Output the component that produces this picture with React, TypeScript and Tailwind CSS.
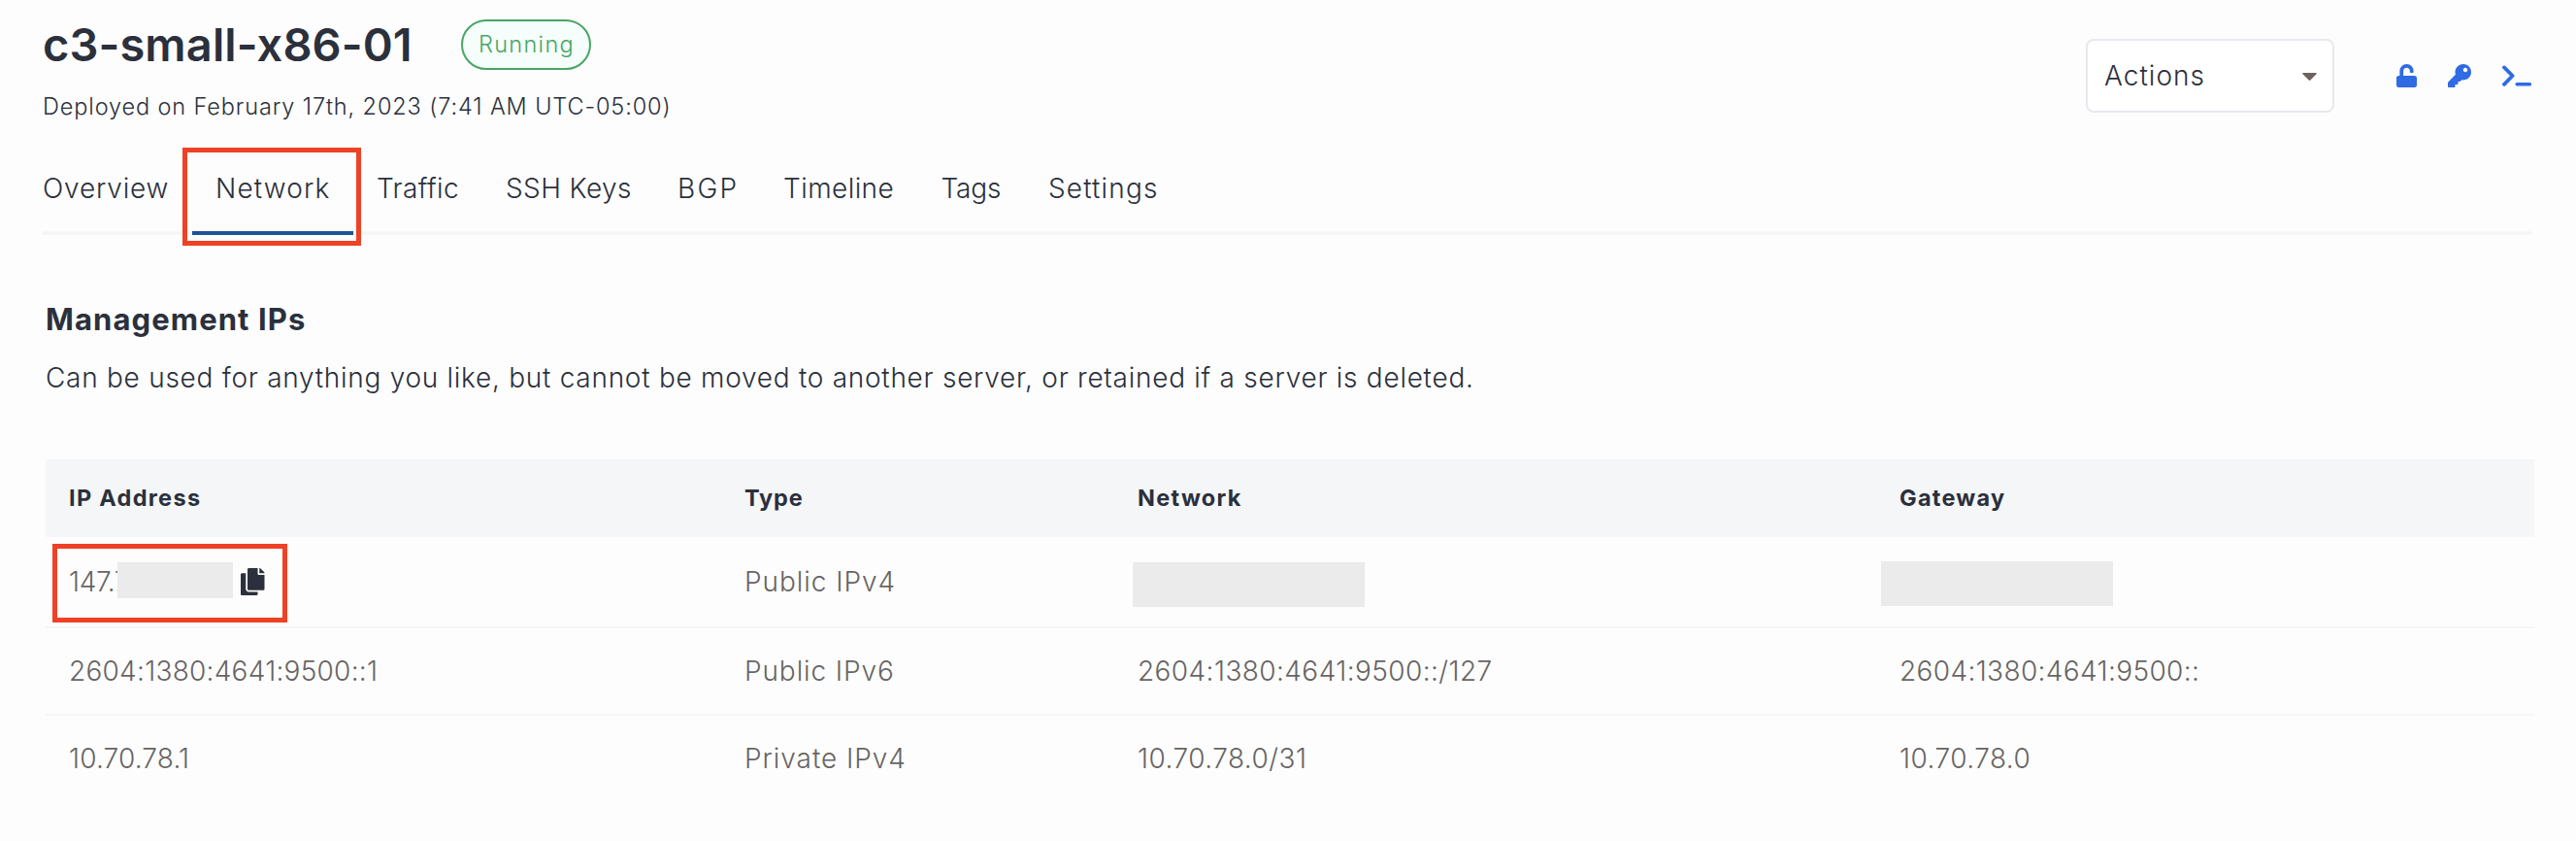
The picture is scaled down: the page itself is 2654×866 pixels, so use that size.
import type { ReactNode } from 'react';
import { FaCopy, FaKey, FaUnlock } from 'react-icons/fa';

const tabs = [
  { label: 'Overview', box: 'w-[154px] tracking-[0.82px]' },
  { label: 'Network', box: 'w-[166px] pl-6 tracking-[1.13px]', active: true },
  { label: 'Traffic', box: 'w-[133px] pl-6 tracking-[0.39px]' },
  { label: 'SSH Keys', box: 'w-[177px] pl-6 tracking-[0.39px]' },
  { label: 'BGP', box: 'w-[109px] pl-6 tracking-[2.25px]' },
  { label: 'Timeline', box: 'w-[162.5px] pl-6 tracking-[0.42px]' },
  { label: 'Tags', box: 'w-[110.5px] pl-6 tracking-[-0.17px]' },
  { label: 'Settings', box: 'pl-6 tracking-[1.15px]' },
];

const columns = 'grid grid-cols-[696px_405px_785px_1fr] items-center';

function Redacted({ className }: { className: string }) {
  return <span className={`block bg-[#ebebeb] ${className}`} />;
}

function Cell({ className = '', children }: { className?: string; children: ReactNode }) {
  return <div className={`pl-6 whitespace-nowrap ${className}`}>{children}</div>;
}

function TerminalIcon() {
  return (
    <svg viewBox="0 0 30 24" className="h-6 w-[30px]" fill="none" stroke="currentColor" strokeLinecap="round" strokeLinejoin="round">
      <path d="M2 3.4 10.6 12 2 20.8" strokeWidth="3.8" />
      <path d="M15.2 20.7H28.3" strokeWidth="3.6" />
    </svg>
  );
}

function Header() {
  return (
    <header className="flex justify-between pt-5 pr-[46px] pl-11">
      <div>
        <div className="flex h-[52px] items-center">
          <h1 className="w-[431px] text-[47px] font-semibold tracking-[0.1px] whitespace-nowrap">c3-small-x86-01</h1>
          <span className="flex h-[52px] w-[134px] items-center rounded-[26px] border-2 border-[#48a565] bg-[#f5fefa] pl-4 text-[23.5px] tracking-[1.3px] text-[#48a565]">
            Running
          </span>
        </div>
        <p className="mt-[22px] text-[23.5px] leading-8 tracking-[0.88px]">
          Deployed on February 17th, 2023 (7:41 AM UTC-05:00)
        </p>
      </div>
      <div className="mt-5 flex h-[76px] items-center text-[#2f6be3]">
        <button className="flex h-[76px] w-64 items-center justify-between rounded-lg border-2 border-[#e8e8ef] bg-white pr-4 pl-[17px] text-[28px] tracking-[1.04px] text-[#2b303c]">
          Actions
          <svg viewBox="0 0 15 8" className="mt-0.5 h-2 w-[15px] fill-[#6b6461]">
            <path d="M1 0h13q1.4.2.5 1.2L8.6 7.2q-1.1 1-2.2 0L.5 1.2Q-.4.2 1 0Z" />
          </svg>
        </button>
        <FaUnlock className="ml-16 h-6 w-[21px]" />
        <FaKey className="ml-8 h-6 w-6" />
        <span className="ml-8">
          <TerminalIcon />
        </span>
      </div>
    </header>
  );
}

function Tabs() {
  return (
    <nav className="mt-6 mr-[46px] ml-11 flex h-[92px] border-b-4 border-[#f5f6f8] text-[28px]">
      {tabs.map((tab) => (
        <a key={tab.label} className={`relative flex h-[88px] items-center whitespace-nowrap ${tab.box}`}>
          {tab.label}
          {tab.active && (
            <>
              <span className="absolute top-[88px] left-0 h-1 w-[166px] bg-[#1f5297]" />
              <span className="absolute top-[2px] -left-2.5 h-[101px] w-[184px] border-[5px] border-[#ee4126]" />
            </>
          )}
        </a>
      ))}
    </nav>
  );
}

function IpTable() {
  return (
    <div className="mr-[43px] ml-[47px] text-[28px] text-[#676463]">
      <div className={`h-20 bg-[#f5f6f8] text-[23.5px] font-bold text-[#2b303c] ${columns}`}>
        <Cell className="tracking-[1.3px]">IP Address</Cell>
        <Cell className="tracking-[0.84px]">Type</Cell>
        <Cell className="tracking-[1.3px]">Network</Cell>
        <Cell className="tracking-[1.25px]">Gateway</Cell>
      </div>
      <div className={`relative h-[94px] border-b-2 border-[#f5f6f8] ${columns}`}>
        <Cell className="tracking-[-0.37px]">147.7</Cell>
        <Cell className="tracking-[0.95px]">Public IPv4</Cell>
        <Cell>
          <Redacted className="mt-[6px] -ml-[5px] h-[46px] w-[239px]" />
        </Cell>
        <Cell>
          <Redacted className="mt-[4px] -ml-[19px] h-[46px] w-[239px]" />
        </Cell>
        <span className="absolute top-[26px] left-[74px] h-[37px] w-[119px] bg-[#ebebeb]" />
        <FaCopy className="absolute top-8 left-[201px] h-7 w-[24.5px] text-[#2b303c]" />
        <span className="absolute top-[7px] left-[7px] h-[81px] w-[242px] border-[5px] border-[#ee4126]" />
      </div>
      <div className={`h-[90px] border-b-2 border-[#f5f6f8] ${columns}`}>
        <Cell className="tracking-[0.26px]">2604:1380:4641:9500::1</Cell>
        <Cell className="tracking-[0.9px]">Public IPv6</Cell>
        <Cell className="tracking-[0.42px]">2604:1380:4641:9500::/127</Cell>
        <Cell className="tracking-[0.37px]">2604:1380:4641:9500::</Cell>
      </div>
      <div className={`h-[88px] ${columns}`}>
        <Cell className="tracking-[0.15px]">10.70.78.1</Cell>
        <Cell className="tracking-[0.95px]">Private IPv4</Cell>
        <Cell className="tracking-[0.46px]">10.70.78.0/31</Cell>
        <Cell className="tracking-[0.46px]">10.70.78.0</Cell>
      </div>
    </div>
  );
}

export default function App() {
  return (
    <main className="h-[866px] w-full overflow-hidden bg-[#fdfdfd] font-['Inter','Liberation_Sans',sans-serif] font-light text-[#2b303c]">
      <Header />
      <Tabs />
      <section className="h-[231px] pt-[67px] pl-[47px]">
        <h2 className="text-[31px] leading-10 font-bold tracking-[1.09px]">Management IPs</h2>
        <p className="mt-5 text-[28px] leading-10 tracking-[0.73px] whitespace-nowrap">
          Can be used for anything you like, but cannot be moved to another server, or retained if a server is deleted.
        </p>
      </section>
      <IpTable />
    </main>
  );
}
